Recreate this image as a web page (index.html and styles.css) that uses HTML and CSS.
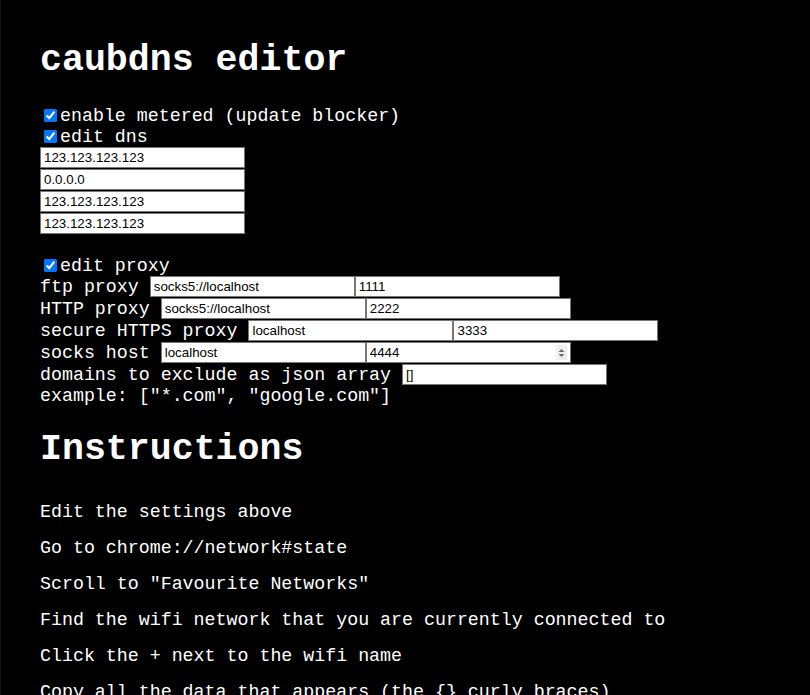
FILE: index.html
```html
<!DOCTYPE html>
<html>
<head>
<meta charset="utf-8">
<title>caubdns editor</title>
<link rel="stylesheet" href="styles.css">
</head>
<body>
<main class="page">
  <h1 class="title">caubdns editor</h1>
  <section class="settings">
    <label class="check"><input type="checkbox" checked>enable metered (update blocker)</label>
    <label class="check"><input type="checkbox" checked>edit dns</label>
    <div class="dns-list">
      <input class="field" type="text" value="123.123.123.123">
      <input class="field" type="text" value="0.0.0.0">
      <input class="field" type="text" value="123.123.123.123">
      <input class="field" type="text" value="123.123.123.123">
    </div>
    <label class="check proxy-check"><input type="checkbox" checked>edit proxy</label>
    <div class="proxy-list">
      <div class="proxy-row"><span class="label">ftp proxy</span><input class="field" type="text" value="socks5://localhost"><input class="field" type="text" value="1111"></div>
      <div class="proxy-row"><span class="label">HTTP proxy</span><input class="field" type="text" value="socks5://localhost"><input class="field" type="text" value="2222"></div>
      <div class="proxy-row"><span class="label">secure HTTPS proxy</span><input class="field" type="text" value="localhost"><input class="field" type="text" value="3333"></div>
      <div class="proxy-row"><span class="label">socks host</span><input class="field" type="text" value="localhost"><span class="num-wrap"><input class="field num" type="text" value="4444"><span class="spin"><svg width="7" height="10" viewBox="0 0 7 10"><path d="M3.5 1 L6.5 4 L0.5 4 Z" fill="#6b6b6b"/><path d="M3.5 9 L6.5 6 L0.5 6 Z" fill="#6b6b6b"/></svg></span></span></div>
      <div class="proxy-row"><span class="label">domains to exclude as json array</span><input class="field" type="text" value="[]"></div>
      <div class="example">example: ["*.com", "google.com"]</div>
    </div>
  </section>
  <h1 class="title instr-title">Instructions</h1>
  <section class="steps">
    <p>Edit the settings above</p>
    <p>Go to chrome://network#state</p>
    <p>Scroll to "Favourite Networks"</p>
    <p>Find the wifi network that you are currently connected to</p>
    <p>Click the + next to the wifi name</p>
    <p>Copy all the data that appears (the {} curly braces)</p>
  </section>
</main>
</body>
</html>
```
FILE: styles.css
```css
html {
  background: #000;
}
body {
  margin: 0;
  background: #000;
  color: #fff;
  font-family: "Liberation Mono", monospace;
  font-size: 18.3px;
  border-left: 1px solid #141414;
  min-height: 695px;
  box-sizing: border-box;
}
.page {
  padding: 15px 39px 0;
}
.title {
  font-size: 2em;
  font-weight: bold;
  margin: 0.67em 0;
}
.settings {
  display: flex;
  flex-direction: column;
  align-items: flex-start;
}
.check {
  display: flex;
  align-items: center;
  height: 21px;
}
.check input {
  margin: 0 3px 0 4px;
  width: 13px;
  height: 13px;
}
.dns-list {
  display: flex;
  flex-direction: column;
  gap: 1px;
  margin-bottom: 21px;
}
.field {
  width: 205px;
  height: 21px;
  box-sizing: border-box;
  font-family: "Liberation Sans", Arial, sans-serif;
  font-size: 13.33px;
  padding: 1px 3px;
  margin: 0;
  border: 1px solid #767676;
  background: #fff;
  color: #000;
  border-radius: 0;
}
.proxy-list {
  display: flex;
  flex-direction: column;
  gap: 1px;
}
.proxy-row {
  display: flex;
  align-items: center;
  height: 21px;
}
.label {
  margin-right: 11px;
  white-space: pre;
}
.num-wrap {
  position: relative;
  display: inline-block;
}
.spin {
  position: absolute;
  right: 4px;
  top: 3px;
  width: 11px;
  height: 15px;
  background: #efefef;
  display: flex;
  align-items: center;
  justify-content: center;
}
.example {
  height: 21px;
  line-height: 21px;
}
.instr-title {
  margin-top: 22px;
}
.steps p {
  margin: 0 0 15px;
  line-height: 21px;
}
.steps {
  padding-top: 7px;
}
```
